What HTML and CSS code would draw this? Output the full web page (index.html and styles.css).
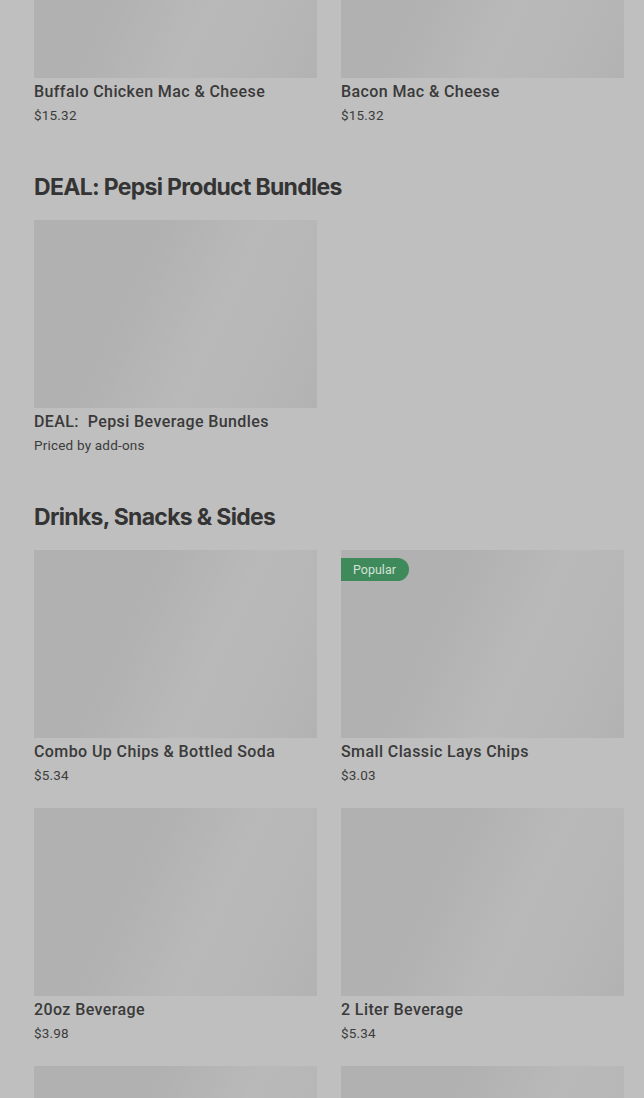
FILE: index.html
```html
<!DOCTYPE html>
<html lang="en">
<head>
    <meta charset="UTF-8">
    <meta name="viewport" content="width=device-width, initial-scale=1.0">
    <title>Menu</title>
    <link rel="stylesheet" href="styles.css">
</head>
<body>
    <div class="menu">
        <section class="section first">
            <div class="grid">
                <div class="item">
                    <div class="thumb"></div>
                    <div class="name">Buffalo Chicken Mac &amp; Cheese</div>
                    <div class="price">$15.32</div>
                </div>
                <div class="item">
                    <div class="thumb"></div>
                    <div class="name">Bacon Mac &amp; Cheese</div>
                    <div class="price">$15.32</div>
                </div>
            </div>
        </section>

        <section class="section">
            <h2 class="title">DEAL: Pepsi Product Bundles</h2>
            <div class="grid">
                <div class="item">
                    <div class="thumb"></div>
                    <div class="name">DEAL:&nbsp; Pepsi Beverage Bundles</div>
                    <div class="price">Priced by add-ons</div>
                </div>
            </div>
        </section>

        <section class="section">
            <h2 class="title">Drinks, Snacks &amp; Sides</h2>
            <div class="grid">
                <div class="item">
                    <div class="thumb"></div>
                    <div class="name">Combo Up Chips &amp; Bottled Soda</div>
                    <div class="price">$5.34</div>
                </div>
                <div class="item">
                    <div class="thumb">
                        <span class="badge">Popular</span>
                    </div>
                    <div class="name">Small Classic Lays Chips</div>
                    <div class="price">$3.03</div>
                </div>
                <div class="item">
                    <div class="thumb"></div>
                    <div class="name">20oz Beverage</div>
                    <div class="price">$3.98</div>
                </div>
                <div class="item">
                    <div class="thumb"></div>
                    <div class="name">2 Liter Beverage</div>
                    <div class="price">$5.34</div>
                </div>
                <div class="item">
                    <div class="thumb"></div>
                </div>
                <div class="item">
                    <div class="thumb"></div>
                </div>
            </div>
        </section>
    </div>
</body>
</html>
```

FILE: styles.css
```css
html, body {
    margin: 0;
    background: #bfbfbf;
    overflow: hidden;
}
body {
    font-family: "Roboto", "Liberation Sans", sans-serif;
    color: #363636;
}
.menu {
    padding: 0 20px 0 34px;
    margin-top: -110px;
}
.section {
    margin-bottom: 47px;
}
.title {
    margin: 0 0 17px;
    font-family: "Inter", "Liberation Sans", sans-serif;
    font-size: 23px;
    line-height: 32px;
    font-weight: 700;
    letter-spacing: -0.7px;
    color: #343434;
}
.grid {
    display: grid;
    grid-template-columns: 283px 283px;
    column-gap: 24px;
    row-gap: 24px;
}
.thumb {
    position: relative;
    height: 188px;
    background: linear-gradient(115deg, #b1b1b1 0%, #b1b1b1 35%, #b9b9b9 62%, #b6b6b6 85%, #b2b2b2 100%);
}
.name {
    margin-top: 4px;
    font-size: 16px;
    line-height: 20px;
    font-weight: 500;
    letter-spacing: 0.4px;
    color: #3a3a3a;
}
.price {
    margin-top: 4px;
    font-size: 13.5px;
    line-height: 18px;
    letter-spacing: 0.2px;
    color: #3c3c3c;
}
.badge {
    position: absolute;
    top: 8px;
    left: 0;
    height: 23px;
    line-height: 23px;
    padding: 0 13px 0 12px;
    border-radius: 0 12px 12px 0;
    background: #3f8a5a;
    color: #d4e2d8;
    font-size: 12.5px;
}
```
